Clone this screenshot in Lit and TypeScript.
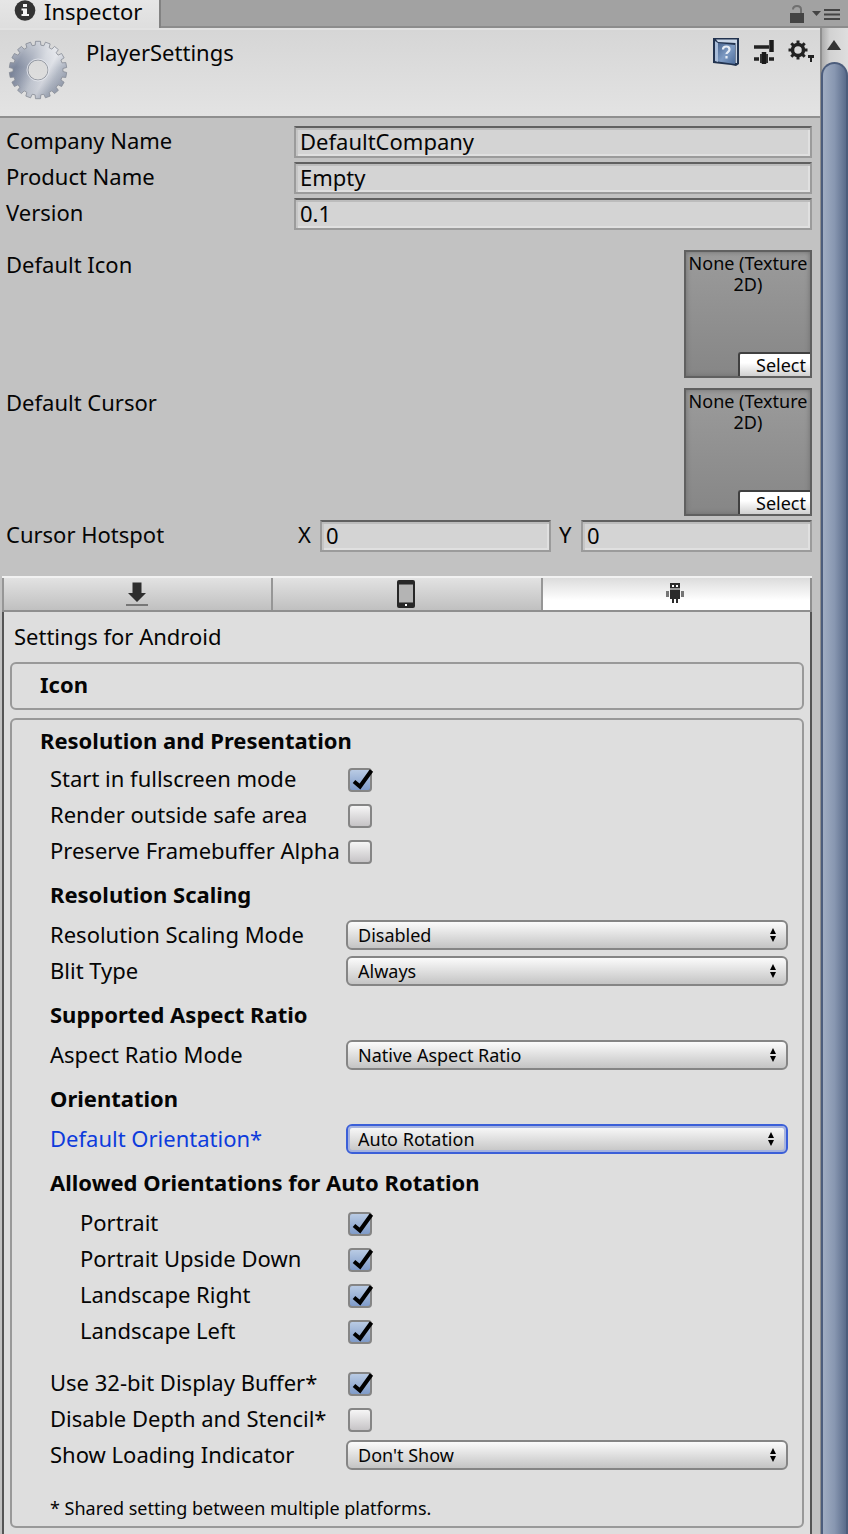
import { LitElement, html, css, svg } from "lit";
import { customElement, state } from "lit/decorators.js";
import { classMap } from "lit/directives/class-map.js";

interface Option {
  kind: "check" | "select" | "heading" | "gap";
  id?: string;
  label?: string;
  checked?: boolean;
  value?: string;
  indent?: boolean;
  modified?: boolean;
}

const OPTIONS: Option[] = [
  { kind: "check", id: "fullscreen", label: "Start in fullscreen mode", checked: true },
  { kind: "check", id: "safe-area", label: "Render outside safe area" },
  { kind: "check", id: "alpha", label: "Preserve Framebuffer Alpha" },
  { kind: "heading", label: "Resolution Scaling" },
  { kind: "select", id: "scaling", label: "Resolution Scaling Mode", value: "Disabled" },
  { kind: "select", id: "blit", label: "Blit Type", value: "Always" },
  { kind: "heading", label: "Supported Aspect Ratio" },
  { kind: "select", id: "aspect", label: "Aspect Ratio Mode", value: "Native Aspect Ratio" },
  { kind: "heading", label: "Orientation" },
  { kind: "select", id: "orientation", label: "Default Orientation*", value: "Auto Rotation", modified: true },
  { kind: "heading", label: "Allowed Orientations for Auto Rotation" },
  { kind: "check", id: "portrait", label: "Portrait", checked: true, indent: true },
  { kind: "check", id: "upside-down", label: "Portrait Upside Down", checked: true, indent: true },
  { kind: "check", id: "land-right", label: "Landscape Right", checked: true, indent: true },
  { kind: "check", id: "land-left", label: "Landscape Left", checked: true, indent: true },
  { kind: "gap" },
  { kind: "check", id: "buffer", label: "Use 32-bit Display Buffer*", checked: true },
  { kind: "check", id: "depth", label: "Disable Depth and Stencil*" },
  { kind: "select", id: "loading", label: "Show Loading Indicator", value: "Don't Show" },
];

// Outline of an 18-tooth wheel centred on 30,30: four corners per tooth.
const wheelOutline = (): string => {
  const points: string[] = [];
  for (let tooth = 0; tooth < 18; tooth++) {
    for (const [angle, radius] of [[-6.5, 25], [-5, 28.8], [5, 28.8], [6.5, 25]]) {
      const t = ((tooth * 20 + angle) * Math.PI) / 180;
      points.push(`${(30 + radius * Math.sin(t)).toFixed(2)} ${(30 - radius * Math.cos(t)).toFixed(2)}`);
    }
  }
  return `M${points.join("L")}Z M40 30a10 10 0 1 0-20 0a10 10 0 1 0 20 0Z`;
};

const infoIcon = html`<svg class="info" width="22" height="22" viewBox="0 0 22 22" aria-hidden="true">
  <circle cx="11" cy="10.5" r="10.3" fill="#333" />
  <path d="M9 4h4v3H9zM7.500 8.500H13v5.500h2v2H7.500v-2H9v-3.500H7.500z" fill="#f4f4f4" />
</svg>`;

const gearIcon = html`<svg class="gear" width="60" height="60" viewBox="0 0 60 60" aria-hidden="true">
  <defs>
    <linearGradient id="steel" gradientUnits="userSpaceOnUse" x1="4" y1="16" x2="56" y2="44">
      <stop offset="0" stop-color="#7b8499" />
      <stop offset="0.14" stop-color="#6f7a91" />
      <stop offset="0.3" stop-color="#8c95a8" />
      <stop offset="0.5" stop-color="#c3c8d2" />
      <stop offset="0.66" stop-color="#d8dbe2" />
      <stop offset="0.82" stop-color="#adb4c1" />
      <stop offset="1" stop-color="#8f97a8" />
    </linearGradient>
    <linearGradient id="shine" x1="0" y1="0" x2="0" y2="1">
      <stop offset="0" stop-color="#fff" stop-opacity="0.6" />
      <stop offset="0.45" stop-color="#fff" stop-opacity="0.1" />
      <stop offset="1" stop-color="#4c566b" stop-opacity="0.15" />
    </linearGradient>
  </defs>
  <path d=${wheelOutline()} fill="url(#steel)" fill-rule="evenodd" />
  <path d=${wheelOutline()} fill="url(#shine)" fill-rule="evenodd" stroke="#868b95" stroke-width="0.800" />
  <circle cx="30" cy="30" r="11" fill="none" stroke="#e4e7ee" stroke-width="0.800" />
</svg>`;

const lockIcon = html`<svg width="16" height="20" viewBox="0 0 16 20" aria-hidden="true">
  <path d="M1 9h14v10H1z" fill="#444" />
  <path d="M4 5.500C4 3 5.500 2 8 2s4 1 4 3.500V9" fill="none" stroke="#707070" stroke-width="2" />
</svg>`;

const menuIcon = html`<svg width="30" height="14" viewBox="0 0 30 14" aria-hidden="true">
  <path d="M1 4h9l-4.500 5z" fill="#444" />
  <path d="M13 3h16M13 7.500h16M13 12h16" stroke="#444" stroke-width="2" />
</svg>`;

const bookIcon = html`<svg width="28" height="30" viewBox="0 0 28 30" aria-hidden="true">
  <defs><linearGradient id="cover" x1="0" y1="0" x2="1" y2="1">
    <stop offset="0" stop-color="#4a6690" /><stop offset="0.5" stop-color="#7f9cc4" /><stop offset="1" stop-color="#4d6d9c" />
  </linearGradient></defs>
  <path d="M1 0h26v26l-3 2-5-1-18-2z" fill="#22334f" />
  <path d="M3 3l3 2v19l-3-1z" fill="#a9bdd9" />
  <path d="M4 1.500h21V25h-1.500V5L6 4z" fill="#c8d5e6" />
  <path d="M6 5l17 2v19L6 23.500z" fill="url(#cover)" />
  <path d="M11 11.500c0-4 6.500-4 6.500 0 0 2.500-3 2.500-3 4.500M14.500 18v2.500" fill="none" stroke="#e8eef6" stroke-width="2.200" />
</svg>`;

const presetIcon = html`<svg width="22" height="26" viewBox="0 0 22 26" aria-hidden="true">
  <path d="M1 8h15M1 20h5M16 20h5" stroke="#222" stroke-width="3.500" />
  <path d="M18.500 1v12M11 13v12" stroke="#1b1b1b" stroke-width="4.500" />
  <path d="M8 15v9M14 15v9" stroke="#333" stroke-width="2" />
</svg>`;

const cogIcon = html`<svg width="28" height="24" viewBox="0 0 28 24" aria-hidden="true">
  ${[0, 45, 90, 135, 180, 225, 270, 315].map((a) => svg`<rect x="8.500" y="0.500" width="3" height="5" fill="#222" transform="rotate(${a} 10 10)" />`)}
  <circle cx="10" cy="10" r="5.500" fill="none" stroke="#222" stroke-width="3.500" />
  <path d="M20 15h6v3h-2v4h-2v-4h-2z" fill="#222" />
</svg>`;

const downloadIcon = html`<svg width="24" height="26" viewBox="0 0 24 26" aria-hidden="true">
  <path d="M7.500 1.500h9V12H21l-9 9-9-9h4.500z" fill="#2e2e2e" />
  <path d="M1 24h22" stroke="#777" stroke-width="2" />
</svg>`;

const phoneIcon = html`<svg width="20" height="28" viewBox="0 0 20 28" aria-hidden="true">
  <rect x="1" y="0" width="18" height="28" rx="2" fill="#272727" />
  <rect x="3" y="5" width="14" height="17" fill="#b4b4b4" />
  <path d="M3 4.500h14M3 22.500h14" stroke="#6b6b6b" />
  <path d="M9 24h2v2H9z" fill="#fff" />
</svg>`;

const robotIcon = html`<svg width="20" height="24" viewBox="0 0 20 24" aria-hidden="true">
  <path d="M5 1h10v5H5zM5 8h10v9H5zM7 16h2v5H7zM11 16h2v5h-2z" fill="#2b2b2b" />
  <path d="M5 6h10v2H5z" fill="#999" />
  <path d="M1 9h3v6H1zM16 9h3v6h-3z" fill="#757575" />
  <path d="M7 3h2v2H7zM11 3h2v2h-2z" fill="#fff" />
</svg>`;

const checkMark = html`<svg class="mark" width="26" height="26" viewBox="0 0 26 26" aria-hidden="true">
  <path d="M6 13.500l6 5L23.500 2.500" fill="none" stroke="#000" stroke-width="4" />
</svg>`;

const arrows = html`<svg class="arrows" width="6" height="14" viewBox="0 0 6 14" aria-hidden="true">
  <path d="M0 6l3-6 3 6zM0 8l3 6 3-6z" fill="#000" />
</svg>`;

const PLATFORMS = [
  { name: "Standalone", icon: downloadIcon },
  { name: "iOS", icon: phoneIcon },
  { name: "Android", icon: robotIcon },
];

@customElement("app-root")
export class AppRoot extends LitElement {
  @state() private platform = 2;

  static styles = css`
    :host {
      display: flex;
      flex-direction: column;
      min-height: 100vh;
      background: #c2c2c2;
      color: #050505;
      font: 22px/32px "Noto Sans", "Open Sans", sans-serif;
    }
    * { box-sizing: border-box; }
    svg { display: block; }
    h1, h2, h3, p { margin: 0; font-weight: inherit; font-size: inherit; }
    button, input, select { font: inherit; color: inherit; margin: 0; }

    .tabbar {
      display: flex;
      justify-content: space-between;
      height: 28px;
      background: #a2a2a2;
      border-bottom: 2px solid #8c8c8c;
    }
    .tab {
      display: flex;
      align-items: center;
      gap: 8px;
      height: 28px;
      padding: 0 17px 6px 14px;
      background: linear-gradient(#e6e6e6, #dedede);
      border: 0;
      border-right: 2px solid #828282;
      line-height: 22px;
    }
    .window { display: flex; align-items: center; gap: 6px; padding: 2px 7px 0 0; }
    .tool { display: grid; place-items: center; padding: 0; border: 0; background: none; }

    .body { flex: 1; display: grid; grid-template-columns: minmax(0, 1fr) 28px; }

    .header {
      display: flex;
      gap: 18px;
      height: 90px;
      padding: 8px 4px 0 8px;
      background: linear-gradient(#d6d6d6, #e3e3e3);
      border-top: 2px solid #e2e2e2;
      border-bottom: 2px solid #8f8f8f;
    }
    .gear { margin-top: 2px; }
    .title { flex: 1; line-height: 28px; }
    .tools { display: flex; align-items: start; gap: 13px; }
    .tools .tool { height: 28px; }

    .fields { display: grid; gap: 4px; padding: 8px 8px 0 6px; }
    .field { display: grid; grid-template-columns: 288px minmax(0, 1fr); }
    .field label, .field span { line-height: 28px; }
    .text {
      width: 100%;
      min-width: 0;
      height: 32px;
      padding: 0 4px 3px;
      background: #d4d4d4;
      border: 2px solid #9b9b9b;
      border-top-color: #606060;
      border-radius: 0;
      box-shadow: inset 0 2px #bcbcbc, inset 2px 0 #c6c6c6, inset -2px -2px #e0e0e0;
      outline: none;
    }
    .slots { display: grid; gap: 10px; padding: 20px 8px 4px 6px; }
    .slot-row { display: flex; justify-content: space-between; line-height: 28px; }
    .slot {
      display: flex;
      flex-direction: column;
      justify-content: space-between;
      width: 128px;
      height: 128px;
      background: linear-gradient(#9b9b9b, #868686);
      border: 2px solid #606060;
      box-shadow: inset 0 0 5px #6c6c6c;
      font-size: 18px;
      line-height: 21px;
      text-align: center;
      padding-top: 1px;
      white-space: nowrap;
    }
    .pick {
      align-self: end;
      width: 72px;
      height: 24px;
      padding: 0 4px 0 0;
      text-align: right;
      line-height: 22px;
      background: linear-gradient(#fff 40%, #d0d0d0);
      border: 0 solid #404040;
      border-width: 2px 0 0 2px;
      border-top-left-radius: 3px;
    }
    .hotspot { padding: 0 8px 24px 6px; }
    .pair { display: grid; grid-template-columns: 26px minmax(0, 1fr) 30px minmax(0, 1fr); }
    .pair label { padding-left: 4px; }
    .pair label + input + label { padding-left: 8px; }

    .platforms {
      display: flex;
      height: 36px;
      margin: 0 8px 0 2px;
      border-top: 2px solid #f1f1f1;
      background: #8f8f8f;
      padding: 0 2px 2px 0;
    }
    .platform {
      flex: 1 1 0;
      display: grid;
      place-items: center;
      padding: 0 2px 0 0;
      border: 0;
      border-left: 2px solid #969696;
      background: linear-gradient(#e2e2e2, #c0c0c0);
    }
    .platform.on { background: linear-gradient(#dcdcdc, #fff 70%); }

    .main { display: flex; flex-direction: column; min-width: 0; }
    .panel {
      flex: 1;
      margin: 0 8px 0 2px;
      padding: 8px 6px 4px;
      background: #dedede;
      border: 0 solid #555;
      border-width: 0 2px;
    }
    .caption { padding-left: 4px; margin-bottom: 10px; }
    .section { border: 2px solid #999; border-radius: 6px; }
    .section + .section { margin-top: 8px; }
    .section-title {
      display: block;
      width: 100%;
      padding: 0 0 2px 28px;
      border: 0;
      background: none;
      text-align: left;
      font-weight: 700;
      line-height: 40px;
    }
    .closed { padding-bottom: 2px; }

    .options { padding: 0 14px 0 38px; }
    .row { display: grid; grid-template-columns: 296px minmax(0, 1fr); align-items: start; height: 36px; }
    .row label { white-space: nowrap; }
    .indent label { padding-left: 30px; }
    .modified label { color: #0d3bdc; }
    .heading { padding: 8px 0; font-weight: 700; }
    .gap { height: 16px; }
    .box { display: grid; width: 26px; margin: 6px 0 0 2px; }
    .box > * { grid-area: 1 / 1; }
    .box input {
      appearance: none;
      width: 24px;
      height: 24px;
      border: 2px solid #858585;
      border-radius: 4px;
      background: linear-gradient(#f6f6f6, #c6c4c6);
    }
    .box input:checked { background: linear-gradient(#b9cbe4, #7f9bc9); }
    .mark { pointer-events: none; display: none; }
    .box input:checked + .mark { display: block; }
    .drop { display: grid; margin-top: 2px; font-size: 18px; }
    .drop > * { grid-area: 1 / 1; }
    .drop select {
      appearance: none;
      width: 100%;
      height: 30px;
      padding: 0 28px 0 10px;
      border: 2px solid #858585;
      border-radius: 6px;
      background: linear-gradient(#fbfbfb, #c4c4c4);
      line-height: 26px;
      outline: none;
    }
    .modified select { border-color: #3b5fd8; box-shadow: inset 0 0 0 2px #a5b3df; }
    .arrows { pointer-events: none; place-self: center end; margin-right: 12px; }
    .modified .arrows { margin-right: 14px; }
    .note { padding: 18px 0 2px; font-size: 18px; }

    .scroll {
      display: flex;
      flex-direction: column;
      background: linear-gradient(90deg, #8f8f8f 2px, #adadad 2px, #d2d2d2 10px, #dedede);
    }
    .up { height: 34px; padding: 0; border: 0; background: none; display: grid; place-items: center; }
    .thumb {
      flex: 1;
      margin-left: 1px;
      border: 2px solid #4c5d7c;
      border-bottom: 0;
      border-radius: 14px 14px 0 0;
      background: linear-gradient(90deg, #a0adc2, #8897b1 50%, #5b6c8b);
    }
  `;

  private check(o: Option) {
    return html`<span class="box">
      <input type="checkbox" id=${o.id!} ?checked=${o.checked} />${checkMark}
    </span>`;
  }

  private drop(o: Option) {
    return html`<span class="drop">
      <select id=${o.id!}><option>${o.value}</option></select>${arrows}
    </span>`;
  }

  private option(o: Option) {
    if (o.kind === "gap") return html`<div class="gap"></div>`;
    if (o.kind === "heading") return html`<h3 class="heading">${o.label}</h3>`;
    return html`<div class=${classMap({ row: true, indent: !!o.indent, modified: !!o.modified })}>
      <label for=${o.id!}>${o.label}</label>
      ${o.kind === "check" ? this.check(o) : this.drop(o)}
    </div>`;
  }

  private field(id: string, label: string, value: string) {
    return html`<div class="field">
      <label for=${id}>${label}</label>
      <input class="text" id=${id} type="text" .value=${value} />
    </div>`;
  }

  private slotRow(label: string) {
    return html`<div class="slot-row">
      <span>${label}</span>
      <div class="slot">
        <span>None (Texture<br />2D)</span>
        <button class="pick">Select</button>
      </div>
    </div>`;
  }

  render() {
    return html`
      <div class="tabbar">
        <button class="tab">${infoIcon}Inspector</button>
        <div class="window">
          <button class="tool" aria-label="Lock">${lockIcon}</button>
          <button class="tool" aria-label="Menu">${menuIcon}</button>
        </div>
      </div>
      <div class="body">
        <main class="main">
          <header class="header">
            ${gearIcon}
            <h1 class="title">PlayerSettings</h1>
            <div class="tools">
              <button class="tool" aria-label="Help">${bookIcon}</button>
              <button class="tool" aria-label="Presets">${presetIcon}</button>
              <button class="tool" aria-label="Options">${cogIcon}</button>
            </div>
          </header>
          <div class="fields">
            ${this.field("company", "Company Name", "DefaultCompany")}
            ${this.field("product", "Product Name", "Empty")}
            ${this.field("version", "Version", "0.1")}
          </div>
          <div class="slots">${this.slotRow("Default Icon")}${this.slotRow("Default Cursor")}</div>
          <div class="hotspot">
            <div class="field">
              <span>Cursor Hotspot</span>
              <div class="pair">
                <label for="hx">X</label><input class="text" id="hx" type="text" .value=${"0"} />
                <label for="hy">Y</label><input class="text" id="hy" type="text" .value=${"0"} />
              </div>
            </div>
          </div>
          <div class="platforms" role="tablist">
            ${PLATFORMS.map(
              (p, i) => html`<button
                role="tab"
                aria-label=${p.name}
                aria-selected=${i === this.platform}
                class=${classMap({ platform: true, on: i === this.platform })}
                @click=${() => (this.platform = i)}
              >${p.icon}</button>`
            )}
          </div>
          <div class="panel">
            <p class="caption">Settings for ${PLATFORMS[this.platform].name}</p>
            <section class="section closed">
              <button class="section-title" aria-expanded="false">Icon</button>
            </section>
            <section class="section">
              <button class="section-title" aria-expanded="true">Resolution and Presentation</button>
              <div class="options">
                ${OPTIONS.map((o) => this.option(o))}
                <p class="note">* Shared setting between multiple platforms.</p>
              </div>
            </section>
          </div>
        </main>
        <div class="scroll">
          <button class="up" aria-label="Scroll up">
            <svg width="14" height="10" viewBox="0 0 14 10" aria-hidden="true"><path d="M0 10L7 0l7 10z" fill="#333" /></svg>
          </button>
          <div class="thumb"></div>
        </div>
      </div>
    `;
  }
}
